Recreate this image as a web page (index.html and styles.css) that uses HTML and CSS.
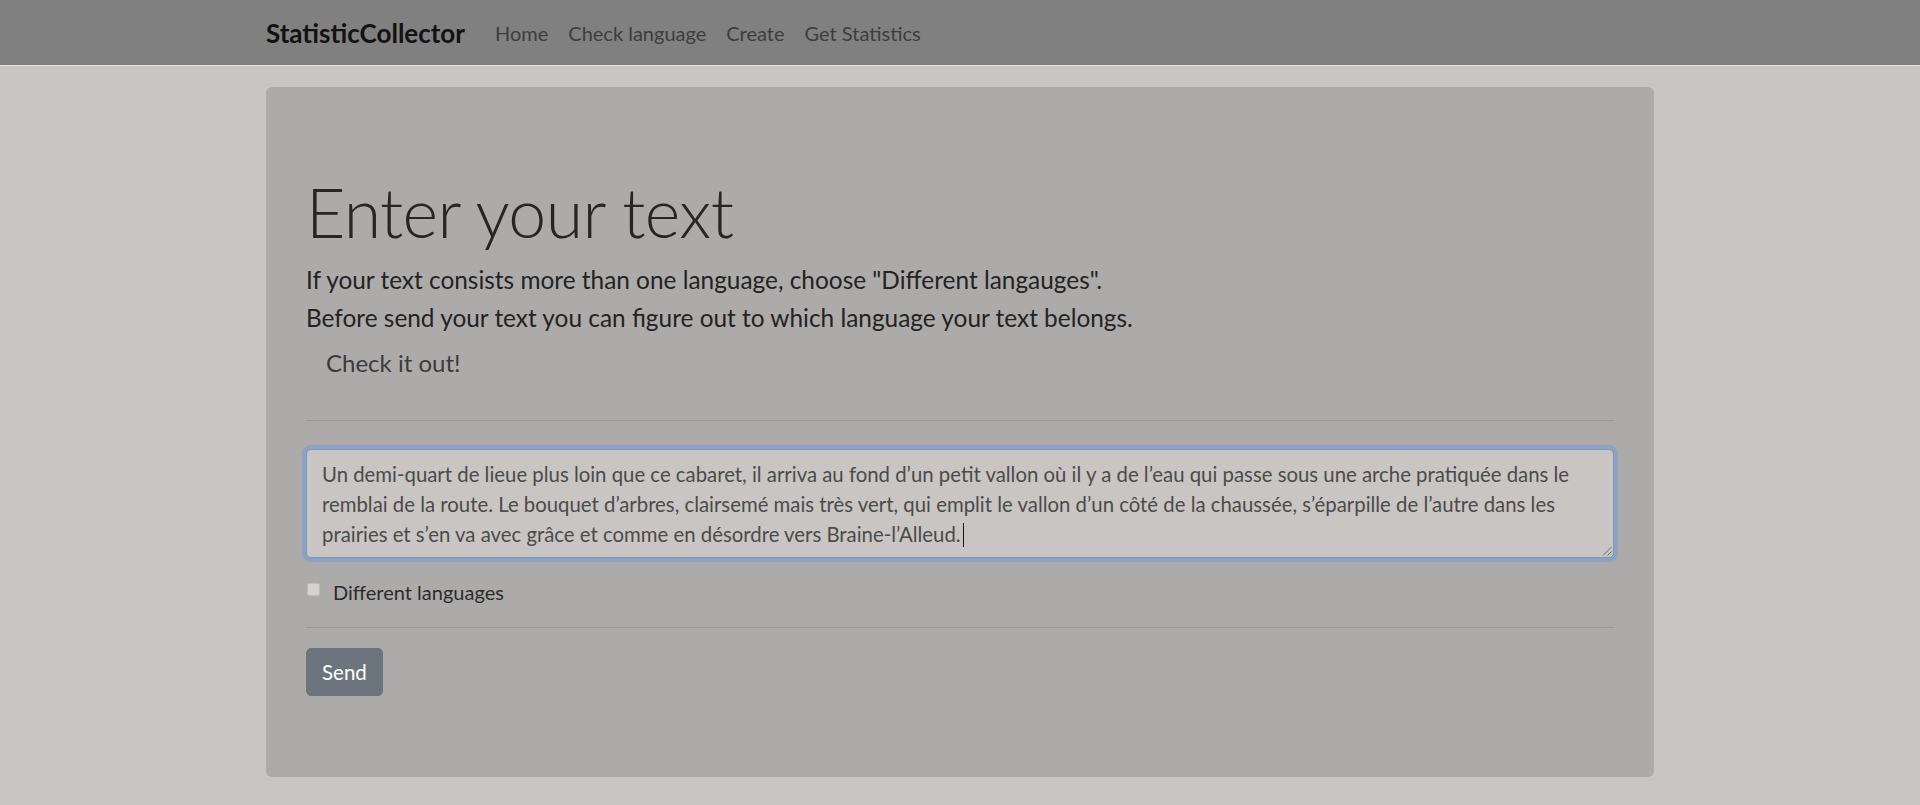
FILE: index.html
```html
<!DOCTYPE html>
<html lang="en">
<head>
<meta charset="utf-8">
<title>StatisticCollector</title>
<link rel="stylesheet" href="styles.css">
</head>
<body>
<nav class="navbar">
  <div class="container nav-inner">
    <a class="brand" href="#">StatisticCollector</a>
    <ul class="nav-links">
      <li><a href="#">Home</a></li>
      <li><a href="#">Check language</a></li>
      <li><a href="#">Create</a></li>
      <li><a href="#">Get Statistics</a></li>
    </ul>
  </div>
</nav>
<main class="container main">
  <section class="jumbotron">
    <h1 class="display">Enter your text</h1>
    <p class="lead">If your text consists more than one language, choose "Different langauges".<br>Before send your text you can figure out to which language your text belongs.</p>
    <div class="cta"><a class="check" href="#">Check it out!</a></div>
    <hr class="rule">
    <form class="form">
      <div class="textarea">Un demi-quart de lieue plus loin que ce cabaret, il arriva au fond d’un petit vallon où il y a de l’eau qui passe sous une arche pratiquée dans le<br>remblai de la route. Le bouquet d’arbres, clairsemé mais très vert, qui emplit le vallon d’un côté de la chaussée, s’éparpille de l’autre dans les<br>prairies et s’en va avec grâce et comme en désordre vers Braine-l’Alleud.<span class="caret"></span><svg class="grip" width="10" height="10" viewBox="0 0 10 10"><line x1="9.5" y1="1" x2="1" y2="9.5" stroke="#6a6866" stroke-width="1"/><line x1="9.5" y1="5.5" x2="5.5" y2="9.5" stroke="#6a6866" stroke-width="1"/></svg></div>
      <div class="form-check">
        <input class="checkbox" type="checkbox" id="diff">
        <label class="check-label" for="diff">Different languages</label>
      </div>
      <hr class="rule rule-2">
      <button class="btn" type="button">Send</button>
    </form>
  </section>
</main>
</body>
</html>
```
FILE: styles.css
```css
html, body {
  margin: 0;
  padding: 0;
}
body {
  background: #c8c5c3;
  font-family: "Lato", "Open Sans", sans-serif;
  color: #232323;
}
.container {
  width: 1388px;
  margin: 0 auto;
}
.navbar {
  background: #808080;
  height: 65px;
  border-bottom: 1px solid #e2e2e2;
}
.nav-inner {
  height: 100%;
  display: flex;
  align-items: center;
}
.brand {
  font-size: 26px;
  font-weight: 700;
  color: #121212;
  text-decoration: none;
  margin-right: 20px;
}
.nav-links {
  list-style: none;
  display: flex;
  margin: 0;
  padding: 0;
}
.nav-links a {
  display: block;
  padding: 0 10px;
  font-size: 20px;
  color: #3d3d3d;
  text-decoration: none;
}
.main {
  padding-top: 21px;
}
.jumbotron {
  background: #acaba9;
  border-radius: 6px;
  padding: 80px 40px 81px;
}
.display {
  font-size: 68px;
  font-weight: 300;
  letter-spacing: -0.6px;
  line-height: 84px;
  margin: 3px 0 7px;
  color: #262626;
}
.lead {
  font-size: 24.4px;
  line-height: 37.5px;
  margin: 0;
  color: #232323;
}
.cta {
  display: flex;
  margin-top: 8px;
  margin-bottom: 10px;
}
.check {
  padding: 0 20px 18px;
  font-size: 24px;
  line-height: 37.5px;
  color: #3b3b3b;
  text-decoration: none;
}
.rule {
  border: 0;
  border-top: 1px solid #9b9a98;
  margin: 20px 0;
}
.form {
  margin: 0;
  padding-top: 8px;
}
.textarea {
  position: relative;
  background: #c8c5c3;
  border: 1px solid #7898c4;
  box-shadow: 0 0 0 4px #8ba2c3;
  border-radius: 5px;
  padding: 9px 15px 8px;
  font-size: 20.35px;
  line-height: 30px;
  color: #4b4b4b;
  white-space: nowrap;
  overflow: hidden;
}
.caret {
  display: inline-block;
  width: 1px;
  height: 24px;
  background: #111;
  vertical-align: -5px;
  margin-left: 2px;
}
.grip {
  position: absolute;
  right: 1px;
  bottom: 1px;
}
.form-check {
  display: flex;
  align-items: flex-start;
  margin-top: 19px;
}
.checkbox {
  appearance: none;
  -webkit-appearance: none;
  width: 13px;
  height: 13px;
  margin: 6px 13px 0 1px;
  background: #d5d3d1;
  border: 1px solid #bebcba;
  border-radius: 2px;
}
.check-label {
  font-size: 20px;
  line-height: 30px;
  color: #2b2b2b;
}
.rule-2 {
  margin-top: 20px;
}
.btn {
  background: #6c757d;
  border: 1px solid #6c757d;
  color: #fff;
  border-radius: 5px;
  font-family: inherit;
  font-size: 20.5px;
  line-height: 30px;
  padding: 8px 15px;
  cursor: pointer;
}
```
